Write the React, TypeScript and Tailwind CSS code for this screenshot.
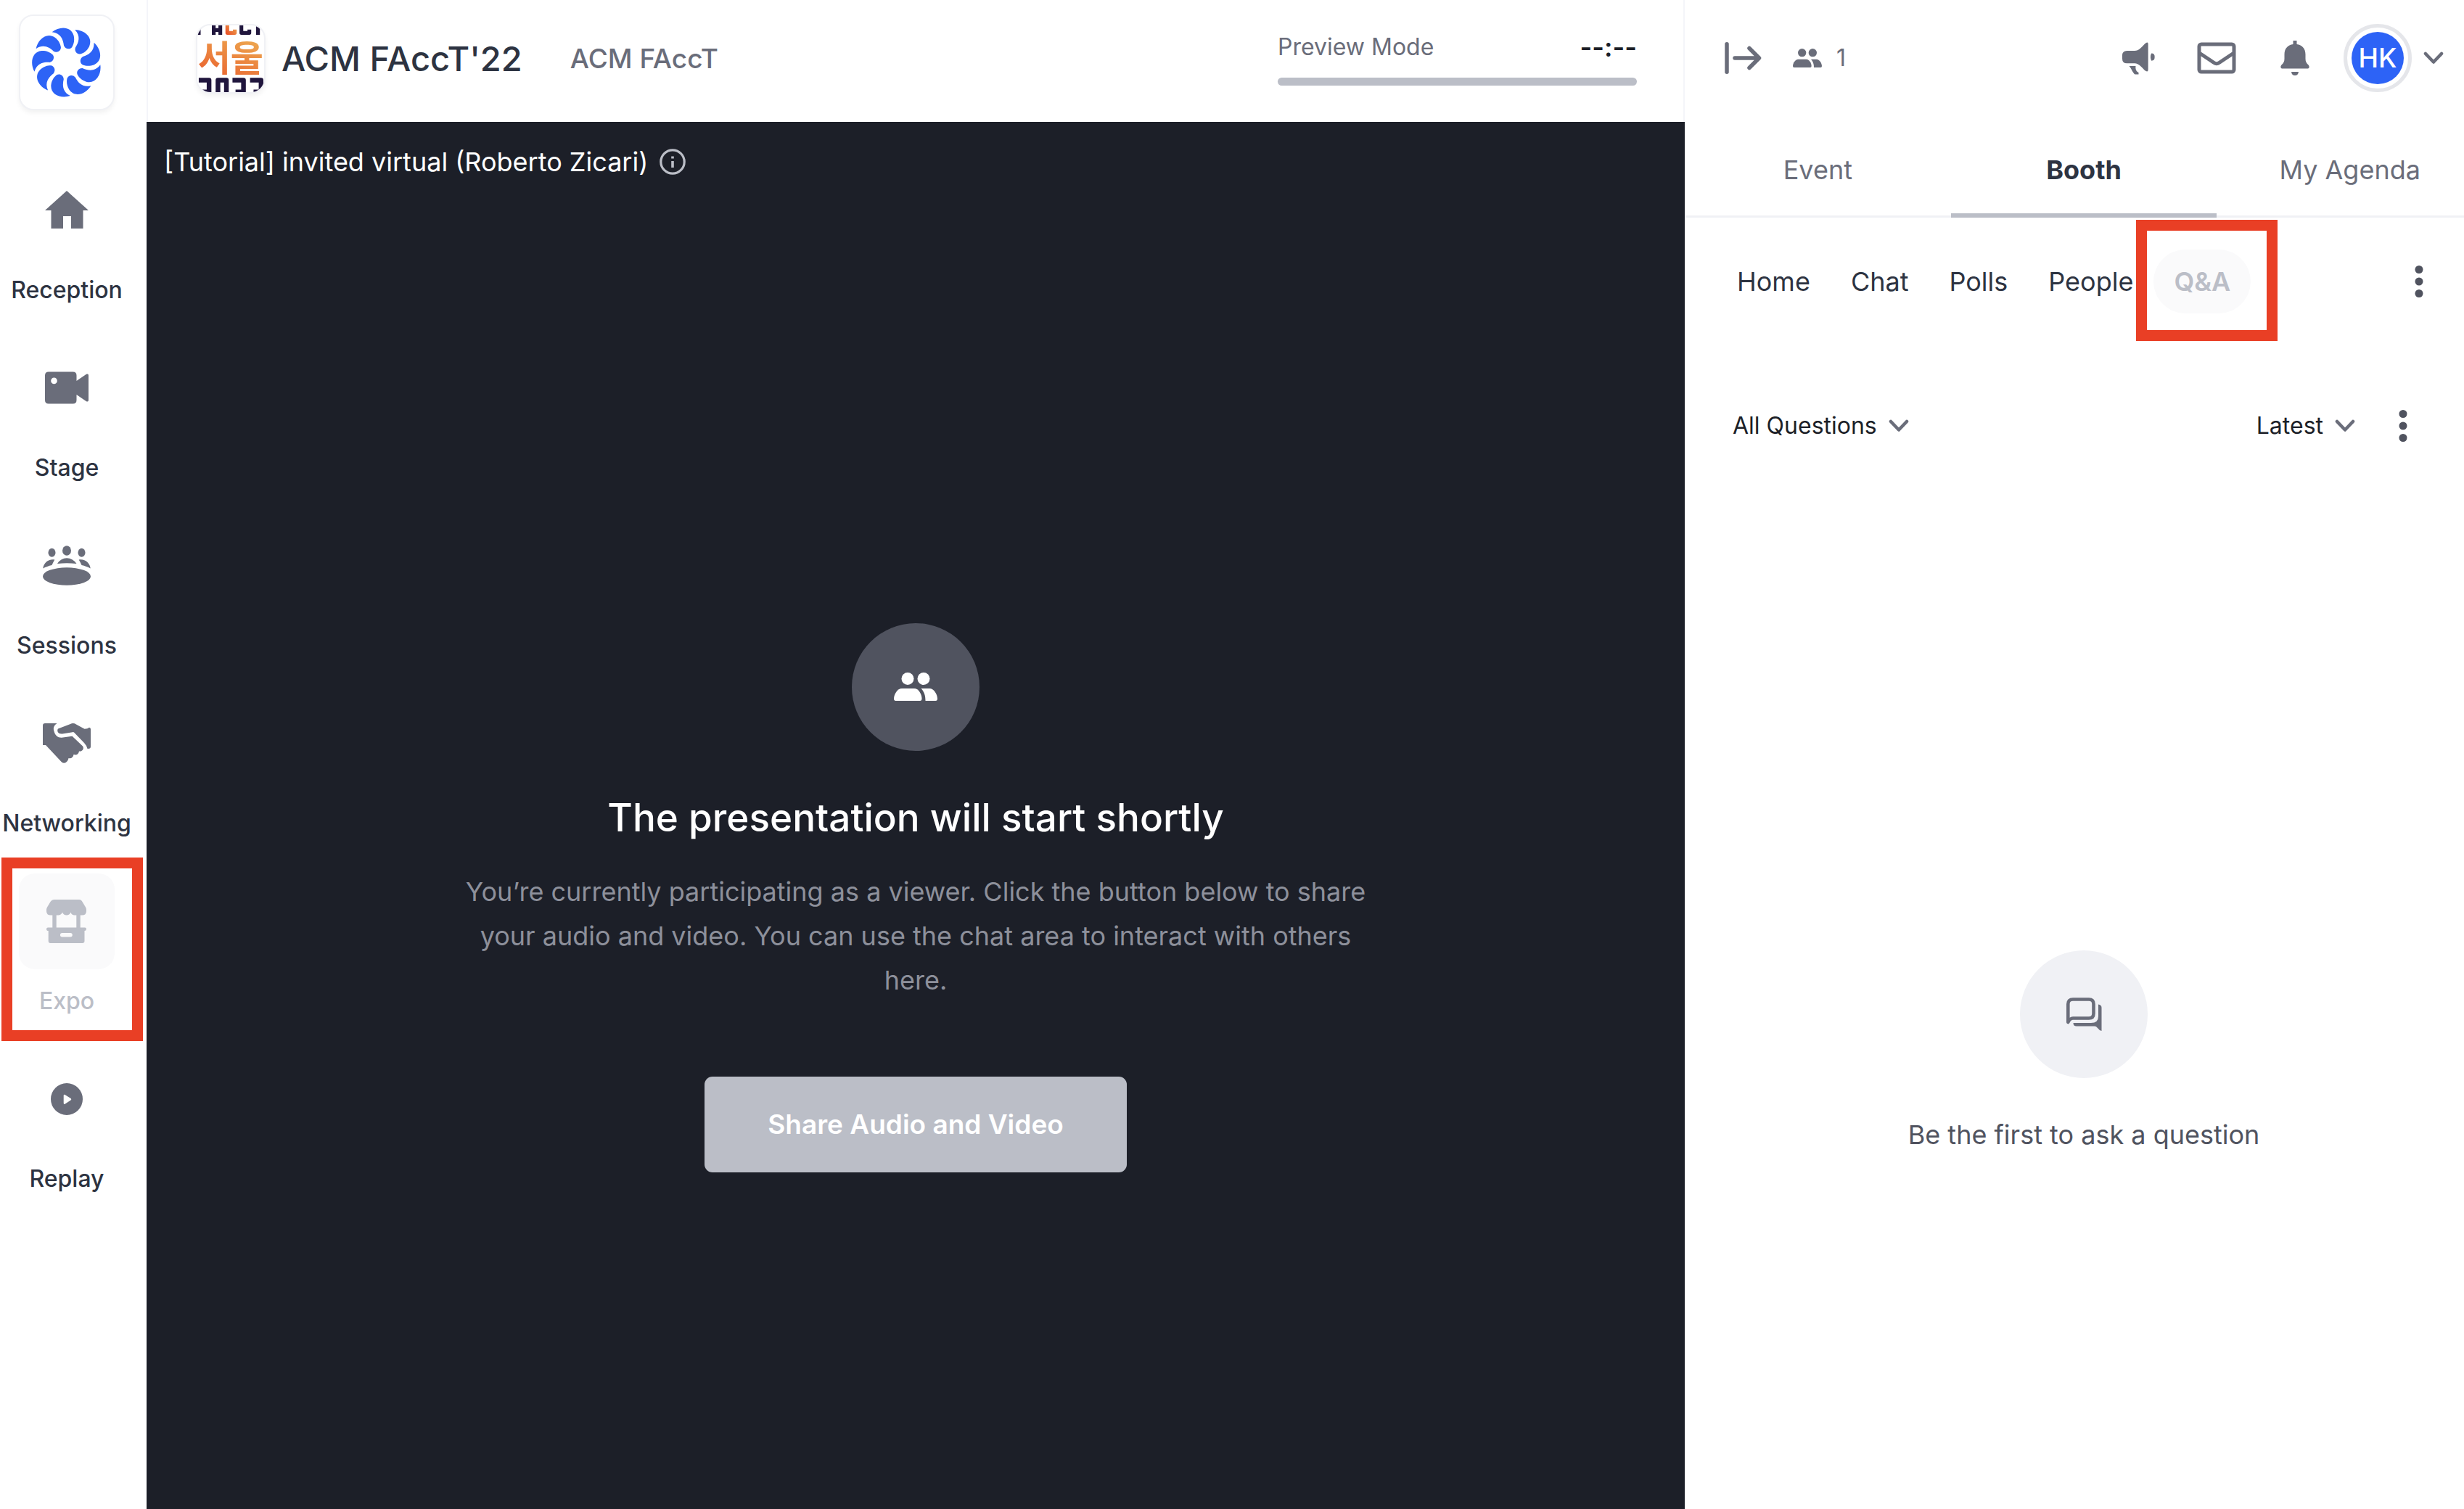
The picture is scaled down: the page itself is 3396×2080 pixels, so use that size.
import type { ReactNode } from "react";

const ROTATIONS = [0, 40, 80, 120, 160, 200, 240, 280, 320];

function SwirlLogo() {
  return (
    <svg viewBox="-144 -144 288 288" className="size-24 fill-[#2d63f6]" aria-hidden="true">
      {ROTATIONS.map((angle) => (
        <path
          key={angle}
          transform={`rotate(${angle})`}
          d="M-61-125C-30-150 18-150 29-110C33-90 29-76 22-64C14-52-6-54-12-70C-15-95-25-121-61-125Z"
        />
      ))}
    </svg>
  );
}

function EventLogo() {
  return (
    <svg viewBox="0 0 285 285" className="size-full" role="img" aria-label="ACM FAccT Seoul 2022">
      <defs>
        <linearGradient id="seoul" x1="0" y1="1" x2="0.5" y2="0">
          <stop offset="0" stopColor="#e9582a" />
          <stop offset="1" stopColor="#eda850" />
        </linearGradient>
        <linearGradient id="mark" x1="0" y1="1" x2="1" y2="0">
          <stop offset="0" stopColor="#e9582a" />
          <stop offset="1" stopColor="#eda850" />
        </linearGradient>
      </defs>
      <g fill="none" stroke="#20163d" strokeWidth="16" strokeLinejoin="round">
        <path d="M6 0V40M70 0V40M98 0V40M70 20H98M259 0V40" />
        <path d="M188-4V32H222V18" />
        <path d="M128-4V32H160V18" stroke="url(#mark)" />
      </g>
      <g fill="none" stroke="#20163d" strokeWidth="20" strokeLinejoin="round">
        <path d="M6 234H50V284H18" />
        <path d="M88 290V234H124V290" />
        <path d="M150 234H197V284H163" />
        <path d="M225 234H272V284H240" />
      </g>
      <text
        x="142"
        y="194"
        fontSize="152"
        textAnchor="middle"
        fill="url(#seoul)"
        className="font-['Noto_Sans_CJK_KR',sans-serif] font-bold"
      >
        서울
      </text>
    </svg>
  );
}

function NavIcon({ children }: { children: ReactNode }) {
  return (
    <svg viewBox="0 0 66 66" className="size-[66px] fill-current" aria-hidden="true">
      {children}
    </svg>
  );
}

const HomeIcon = (
  <NavIcon>
    <path d="M33 6L63 33H55.500V58H39V41H28V58H11.500V33H3Z" />
  </NavIcon>
);

const StageIcon = (
  <NavIcon>
    <path
      fillRule="evenodd"
      d="M8 10.500H41.500Q46.500 10.500 46.500 15.500V23L60 13.800Q63 12.500 63 15.500V49.500Q63 52.500 60 51.200L46.500 42V49.500Q46.500 54.500 41.500 54.500H8Q3 54.500 3 49.500V15.500Q3 10.500 8 10.500ZM15.500 18.600A4.300 4.300 0 1 0 15.500 27.200A4.300 4.300 0 1 0 15.500 18.600Z"
    />
  </NavIcon>
);

const SessionsIcon = (
  <NavIcon>
    <ellipse cx="33" cy="47.500" rx="33" ry="12.300" />
    <ellipse cx="33" cy="12" rx="6" ry="6.800" />
    <ellipse cx="12.500" cy="14.700" rx="5" ry="6" />
    <ellipse cx="53.500" cy="14.700" rx="5" ry="6" />
    <path d="M20 30Q25 22.300 33 22.300Q41 22.300 46.500 30Q33 28.500 20 30Z" />
    <path d="M0.300 36.500C1 29 8 23 16.300 24.500C15 27 13.500 29.500 12.500 32C8 33 4 34.500 0.300 36.500Z" />
    <path d="M65.700 36.500C65 29 58 23 49.700 24.500C51 27 52.500 29.500 53.500 32C58 33 62 34.500 65.700 36.500Z" />
  </NavIcon>
);

const NetworkingIcon = (
  <NavIcon>
    <path d="M3 5H19.500C15 8 14 12 15.500 16C17 22 21 25 26 24.700L40.500 22.700L55 36.500C57.500 40 54 44.500 50 43.500C49.500 47.500 46 49.500 42.500 48C42 52 39 54 35.500 53C34.500 58.500 30 61.500 26 58.500L4 35H0V8Q0 5 3 5Z" />
    <path d="M21 12.500L38 6Q42 4 46 6.500L57.500 12.700Q62 12.700 64 10.800Q66 11 66 13V37Q66 40 63 40H61.500Q60 35 57 32L43 17.500Q42 16.800 41 17.300L27 19.500Q21.500 20 20.300 16Q20 13.500 21 12.500Z" />
  </NavIcon>
);

const ExpoIcon = (
  <NavIcon>
    <path d="M16 3H50Q53 3 54.500 6L59 13.500Q60 15 60 17V19Q60 24.500 54 24.500H43Q39.500 24 38.300 20.500Q37 24.500 32.700 24.500Q28.500 24.500 27 20.500Q25.500 24 22 24.500H11Q5 24.500 5 19V17Q5 15 6 13.500L10.500 6Q12.500 3 16 3Z" />
    <path d="M13.300 24H18.700V42H13.300ZM46.300 24H51.700V42H46.300Z" />
    <path
      fillRule="evenodd"
      d="M7 41.500H58Q60 41.500 60 43.700Q60 46 57.500 46V60Q57.500 63 54.500 63H10.500Q7.700 63 7.700 60V46Q5 46 5 43.700Q5 41.500 7 41.500ZM26.700 49A2.700 2.700 0 0 0 26.700 54.500H38A2.700 2.700 0 0 0 38 49Z"
    />
  </NavIcon>
);

const ReplayIcon = (
  <NavIcon>
    <path
      fillRule="evenodd"
      d="M33 11A22 22 0 1 1 33 55A22 22 0 1 1 33 11ZM28.700 28V38.500Q28.700 40.500 30.500 39.700L38.500 34.500Q40 33.300 38.500 32L30.500 26.900Q28.700 26.300 28.700 28Z"
    />
  </NavIcon>
);

const NAV: { label: string; icon: ReactNode; active?: boolean }[] = [
  { label: "Reception", icon: HomeIcon },
  { label: "Stage", icon: StageIcon },
  { label: "Sessions", icon: SessionsIcon },
  { label: "Networking", icon: NetworkingIcon },
  { label: "Expo", icon: ExpoIcon, active: true },
  { label: "Replay", icon: ReplayIcon },
];

function PeopleIcon({ className }: { className: string }) {
  return (
    <svg viewBox="0 0 60 39" className={className} fill="currentColor" aria-hidden="true">
      <circle cx="19" cy="8.500" r="8.500" />
      <circle cx="41" cy="8.500" r="8.500" />
      <path d="M11 22H28C34 22 38.500 30 38.500 36Q38.500 39 36 39H2.500Q0 39 0 36C0 30 5 22 11 22Z" />
      <path d="M37.500 22H49C55 22 60 30 60 36Q60 39 57.500 39H43.500C43.500 32 42 27 37.500 22Z" />
    </svg>
  );
}

function ChevronDown() {
  return (
    <svg
      viewBox="0 0 28 18"
      className="pointer-events-none h-[18px] w-7 shrink-0 stroke-[#6a6d7a]"
      fill="none"
      strokeWidth="4.500"
      strokeLinecap="round"
      strokeLinejoin="round"
      aria-hidden="true"
    >
      <path d="M3 3L14 14.500L25 3" />
    </svg>
  );
}

function MoreButton({ label }: { label: string }) {
  return (
    <button type="button" aria-label={label} className="text-[#50535f]">
      <svg viewBox="0 0 12 44" className="h-11 w-3 fill-current" aria-hidden="true">
        <circle cx="6" cy="5.500" r="5.500" />
        <circle cx="6" cy="22" r="5.500" />
        <circle cx="6" cy="38.500" r="5.500" />
      </svg>
    </button>
  );
}

function Filter({ label, value }: { label: string; value: string }) {
  return (
    <div className="flex items-center gap-4">
      <select
        aria-label={label}
        className="appearance-none bg-transparent text-[32px] leading-10 text-[#1c1f28] [field-sizing:content]"
      >
        <option>{value}</option>
      </select>
      <ChevronDown />
    </div>
  );
}

function Sidebar() {
  return (
    <aside className="flex w-[202px] shrink-0 flex-col pt-5">
      <a
        href="#home"
        aria-label="Home"
        className="ml-[26px] flex size-[132px] items-center justify-center rounded-[20px] border-2 border-[#f0f1f5] bg-white shadow-[0_4px_6px_rgba(0,0,0,0.05)]"
      >
        <SwirlLogo />
      </a>
      <nav className="mt-[72px] flex w-[184px] flex-col gap-[49px]">
        {NAV.map(({ label, icon, active }) => (
          <a
            key={label}
            href={`#${label.toLowerCase()}`}
            aria-current={active ? "page" : undefined}
            className={`relative flex flex-col items-center gap-6 ${active ? "text-[#bbbec7]" : "text-[#6a6d7a]"}`}
          >
            <span
              className={`flex size-[132px] items-center justify-center rounded-[22px] ${active ? "bg-[#fafafb]" : ""}`}
            >
              {icon}
            </span>
            <span
              className={`text-[32px] leading-10 font-medium ${active ? "text-[#bbbec7]" : "text-[#2d3341]"}`}
            >
              {label}
            </span>
            {active && (
              <span className="absolute -top-[22px] left-[2px] h-[253px] w-[195px] border-[15px] border-[#e93f25]" />
            )}
          </a>
        ))}
      </nav>
    </aside>
  );
}

function Stage() {
  return (
    <main className="flex min-w-0 flex-1 flex-col">
      <header className="flex h-[168px] items-center border-x-2 border-[#f4f5f9] pr-16 pb-[6px] pl-[66px]">
        <div className="size-24 shrink-0 overflow-hidden rounded-[20px] border-2 border-[#f0f1f5] shadow-[0_4px_6px_rgba(0,0,0,0.05)]">
          <EventLogo />
        </div>
        <h1 className="ml-[22px] text-[47px] leading-14 font-medium text-[#2d3341]">ACM FAccT'22</h1>
        <p className="ml-[66px] text-[37px] leading-12 font-medium text-[#6a6d7a]">ACM FAccT</p>
        <div className="ml-auto flex w-[495px] flex-col gap-[22px]">
          <div className="flex items-center justify-between leading-10">
            <span className="text-[32px] text-[#6a6d7a]">Preview Mode</span>
            <span className="text-[36px] font-semibold text-[#1c1f28]">--:--</span>
          </div>
          <div className="h-[11px] rounded-full bg-[#bbbec7]" />
        </div>
      </header>

      <section className="flex flex-1 flex-col bg-[#1c1f28] text-white">
        <div className="flex h-[110px] items-center gap-4 pl-6">
          <h2 className="text-[36px] leading-12">[Tutorial] invited virtual (Roberto Zicari)</h2>
          <button type="button" aria-label="Session information" className="text-[#bbbec7]">
            <svg viewBox="0 0 36 36" className="size-9" fill="none" stroke="currentColor" aria-hidden="true">
              <circle cx="18" cy="18" r="16.200" strokeWidth="3.200" />
              <path d="M18 10.500V13.500M18 17V26" strokeWidth="3.600" />
            </svg>
          </button>
        </div>
        <div className="flex flex-1 flex-col items-center justify-center pt-[116px]">
          <div className="flex size-44 items-center justify-center rounded-full bg-[#50535f]">
            <PeopleIcon className="h-[39px] w-[60px]" />
          </div>
          <h3 className="mt-15 text-[53px] leading-16 font-medium">The presentation will start shortly</h3>
          <p className="mt-10 w-[1280px] text-center text-[36px] leading-[61px] text-[#8d909b]">
            You’re currently participating as a viewer. Click the button below to share your audio and video. You can
            use the chat area to interact with others here.
          </p>
          <button
            type="button"
            className="mt-[102px] h-[132px] w-[582px] rounded-[11px] bg-[#bbbec7] text-[37px] leading-12 font-semibold"
          >
            Share Audio and Video
          </button>
        </div>
      </section>
    </main>
  );
}

const TABS = ["Event", "Booth", "My Agenda"];
const SUB_TABS = ["Home", "Chat", "Polls", "People", "Q&A"];

function Panel() {
  return (
    <aside className="flex w-[1074px] shrink-0 flex-col overflow-hidden text-[#6a6d7a]">
      <header className="flex h-[168px] items-center pr-7 pb-2 pl-[55px]">
        <button type="button" aria-label="Collapse panel">
          <svg
            viewBox="0 0 52 44"
            className="h-11 w-[52px]"
            fill="none"
            stroke="currentColor"
            strokeWidth="5.500"
            strokeLinecap="round"
            strokeLinejoin="round"
            aria-hidden="true"
          >
            <path d="M3 2.800V41.200" />
            <path d="M14 22H47M34 8.500L47.500 22L34 35.500" />
          </svg>
        </button>
        <span className="ml-[42px] flex items-center gap-5 text-[32px] leading-10">
          <PeopleIcon className="h-[26px] w-10" />1
        </span>
        <div className="ml-auto flex items-center">
          <button type="button" aria-label="Announcements" className="flex w-[107px] justify-center">
            <svg viewBox="0 0 45 45" className="size-[45px] fill-current" aria-hidden="true">
              <path d="M6.500 12H17C23 12 26.500 7 31 2.500Q35.700-1.500 35.700 3V37.500Q35.700 42.500 31 39C26.500 34.500 23 29.300 17 29.300H6.500Q0 29.300 0 23V18.500Q0 12 6.500 12Z" />
              <path d="M9.500 33H18.500C18 37 19 40.500 22.500 42V44.500H17.500C14 42 12.500 36 9.500 33Z" />
              <path d="M40.300 15.500Q44.700 15.500 44.700 20.500Q44.700 25.700 40.300 25.700C38.500 23 38.500 18 40.300 15.500Z" />
            </svg>
          </button>
          <button type="button" aria-label="Messages" className="flex w-[107px] justify-center">
            <svg
              viewBox="0 0 54 44"
              className="h-11 w-[54px]"
              fill="none"
              stroke="currentColor"
              strokeWidth="5"
              strokeLinejoin="round"
              aria-hidden="true"
            >
              <rect x="3" y="3" width="48" height="38" rx="3" />
              <path d="M4 15.500L23.500 28.500Q27 31 30.500 28.500L50 15.500" />
            </svg>
          </button>
          <button type="button" aria-label="Notifications" className="flex w-[110px] justify-center">
            <svg viewBox="0 0 40 48" className="h-12 w-10 fill-current" aria-hidden="true">
              <path d="M17.500 0H22.500V5C30 6 34.500 11 34.500 19V25C34.500 29 36 31 38 33C41 36 39.500 38.500 37 38.500H3C0.500 38.500-1 36 2 33C4 31 5.500 29 5.500 25V19C5.500 11 10 6 17.500 5Z" />
              <path d="M15 43H25Q24.500 48 20 48Q15.500 48 15 43Z" />
            </svg>
          </button>
          <button type="button" aria-label="Account menu" className="ml-3 flex items-center gap-4">
            <span className="flex size-[94px] items-center justify-center rounded-full border-[5px] border-[#e5e6ea]">
              <span className="flex size-[72px] items-center justify-center rounded-full bg-[#2d63f6] text-[37px] leading-10 font-medium text-white">
                HK
              </span>
            </span>
            <ChevronDown />
          </button>
        </div>
      </header>

      <div className="flex w-[1100px] flex-1 flex-col">
        <div role="tablist" className="flex h-[132px] items-stretch text-[36px] leading-12">
          {TABS.map((tab) => (
            <button
              key={tab}
              type="button"
              role="tab"
              aria-selected={tab === "Booth"}
              className={`flex-1 ${
                tab === "Booth"
                  ? "border-b-[6px] border-[#bbbec7] pt-[6px] font-bold text-[#2d3341]"
                  : "border-b-[3px] border-[#f0f1f5] pt-[3px] font-normal"
              }`}
            >
              {tab}
            </button>
          ))}
        </div>

        <div className="mt-11 flex items-center pr-[82px] pl-11 text-[36px] leading-12 text-[#2d3341]">
          {SUB_TABS.map((tab) => (
            <button
              key={tab}
              type="button"
              className={`relative h-[88px] rounded-full px-7 ${tab === "Q&A" ? "bg-[#fafafb] font-semibold text-[#bbbec7]" : ""}`}
            >
              {tab}
              {tab === "Q&A" && (
                <span className="absolute -top-[41px] -left-6 h-[167px] w-[195px] border-[15px] border-[#e93f25]" />
              )}
            </button>
          ))}
          <div className="ml-auto flex">
            <MoreButton label="More tabs" />
          </div>
        </div>

        <div className="mt-[115px] flex h-20 items-center justify-between pr-[104px] pl-[66px]">
          <Filter label="Question filter" value="All Questions" />
          <div className="flex items-center gap-[60px]">
            <Filter label="Sort order" value="Latest" />
            <MoreButton label="More question options" />
          </div>
        </div>

        <div className="flex flex-1 flex-col items-center justify-center gap-14 pt-[188px]">
          <div className="flex size-44 items-center justify-center rounded-full bg-[#f0f1f5]">
            <svg viewBox="0 0 49 46" className="h-[46px] w-[49px]" aria-hidden="true">
              <path
                d="M2.300 34V9Q2.300 2.500 9 2.500H31Q37.500 2.500 37.500 9V22Q37.500 28.500 31 28.500H9Q5 28.500 2.300 34Z"
                fill="none"
                stroke="currentColor"
                strokeWidth="4.600"
                strokeLinejoin="round"
              />
              <path
                fill="currentColor"
                d="M44 9.500Q48.500 10 48.500 14V46Q46 46 44 43L41.500 40.500Q40.500 39.500 38.500 39.500H14Q9.500 39.500 9.500 35H34Q44 35 44 26Z"
              />
            </svg>
          </div>
          <p className="text-[36px] leading-11 text-[#50535f]">Be the first to ask a question</p>
        </div>
      </div>
    </aside>
  );
}

export default function App() {
  return (
    <div className="flex min-h-screen overflow-hidden bg-white font-['Inter',sans-serif]">
      <Sidebar />
      <Stage />
      <Panel />
    </div>
  );
}
